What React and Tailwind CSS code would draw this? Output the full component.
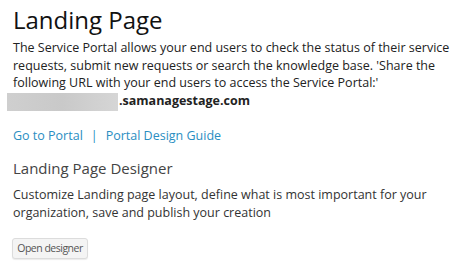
export default function App() {
  return (
    <div
      className="w-[469px] h-[268px] bg-white px-[13px] pt-[2px] text-[#222]"
      style={{ fontFamily: '"Open Sans", sans-serif' }}
    >
      <h1 className="text-[24px] leading-[36px] text-[#111]">Landing Page</h1>
      <div className="relative mt-[1px] text-[12.5px] leading-[17.5px]">
        <p>
          The Service Portal allows your end users to check the status of their service
          requests, submit new requests or search the knowledge base. 'Share the
          following URL with your end users to access the Service Portal:'
        </p>
        <p className="font-bold pl-[106px]">.samanagestage.com</p>
        <div className="absolute left-[-6px] top-[54px] w-[111px] h-[18px] bg-gradient-to-r from-[#cfcfcf] via-[#c9c9c9] to-[#d6d6d6]" />
      </div>
      <div className="mt-[17px] flex items-center gap-[8px] text-[12.5px] leading-[20px] text-[#2a8ec2]">
        <span>Go to Portal</span>
        <span>|</span>
        <span>Portal Design Guide</span>
      </div>
      <h2 className="mt-[10px] text-[15px] leading-[24px] text-[#444]">Landing Page Designer</h2>
      <p className="mt-[6px] text-[12.5px] leading-[17.5px] text-[#333]">
        Customize Landing page layout, define what is most important for your
        organization, save and publish your creation
      </p>
      <button className="ml-[-1px] mt-[17px] h-[21px] w-[76px] rounded-[3px] border border-[#dcdcdc] bg-[#f4f4f4] text-[10.5px] tracking-[-0.5px] leading-[19px] text-[#555] shadow-[0_1px_1px_rgba(0,0,0,0.08)]">
        Open designer
      </button>
    </div>
  );
}
